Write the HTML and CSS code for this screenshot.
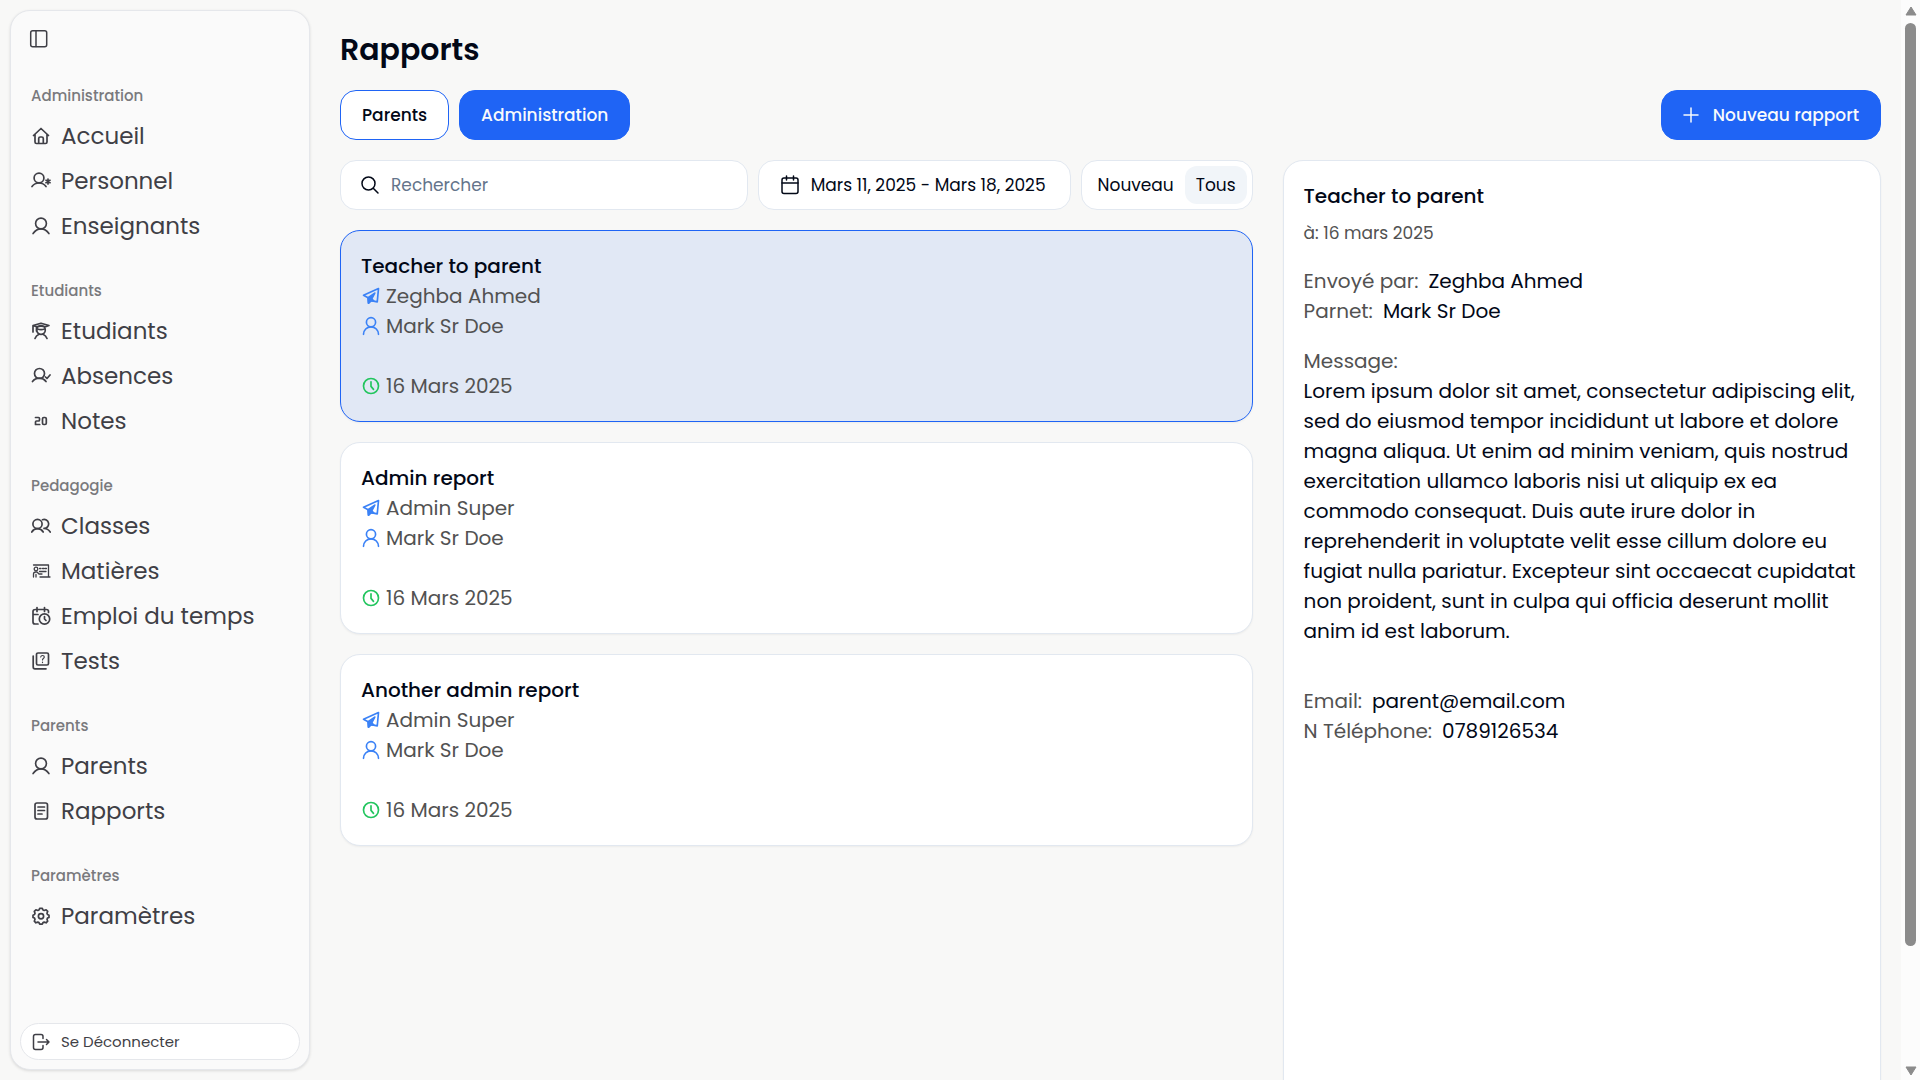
FILE: index.html
```html
<!DOCTYPE html>
<html lang="fr">
<head>
<meta charset="utf-8">
<meta name="viewport" content="width=device-width, initial-scale=1">
<title>Rapports</title>
<link rel="stylesheet" href="styles.css">
</head>
<body>
<svg class="sprite" aria-hidden="true">
  <symbol id="user" viewBox="0 0 24 24"><circle cx="12" cy="9" r="6.500"/><path d="M2.500 21C5 17.500 8 15.500 12 15.500s7 2 9.500 5.500"/></symbol>
  <symbol id="send" viewBox="0 0 24 24"><path d="M21 3 3 11l5.500 3L9 20.500l3-3 7.500 1.500z"/><path class="solid" d="M16.500 8.500 8.500 14 9 20.500l3-3 3.500.700-2.500-3z"/></symbol>
  <symbol id="person" viewBox="0 0 24 24"><circle cx="12" cy="7.500" r="5.500"/><path d="M3 22a9 9 0 0 1 18 0"/></symbol>
  <symbol id="clock" viewBox="0 0 24 24"><circle cx="12" cy="12" r="9"/><path d="M12 7v5.500l3 3.500"/></symbol>
</svg>
<div class="shell">
  <aside class="sidebar">
    <button class="collapse" type="button" aria-label="Réduire le menu">
      <svg class="icon" viewBox="0 0 20 20"><rect x="1.700" y="1.700" width="16" height="16" rx="2"/><path d="M7 2v15.500"/></svg>
    </button>
    <nav class="nav">
      <section class="group">
        <h2 class="group-label">Administration</h2>
        <a class="nav-link" href="#"><svg class="icon" viewBox="0 0 20 20"><path d="m2.500 9.500 7.500-7 7.500 7M4 8.500V16q0 1.500 1.500 1.500h9q1.500 0 1.500-1.500V8.500M7.700 17.500v-5q0-1.500 1.500-1.500h1.600q1.500 0 1.500 1.500v5"/></svg>Accueil</a>
        <a class="nav-link" href="#"><svg class="icon" viewBox="0 0 20 20"><circle cx="8" cy="7" r="4.900"/><path d="M1 15.500q2.500-3.500 7-3.500t7 3.500M17 8v5M15 9.300l4 2.400M19 9.300l-4 2.400"/></svg>Personnel</a>
        <a class="nav-link" href="#"><svg class="icon"><use href="#user"/></svg>Enseignants</a>
      </section>
      <section class="group">
        <h2 class="group-label">Etudiants</h2>
        <a class="nav-link" href="#"><svg class="icon" viewBox="0 0 20 20"><path d="m2 4.500 8-2.300 8 2.300-3.500 1.300q-4.500-1.500-9 0zM2 4.500V11M5.500 6v4"/><circle cx="10" cy="9" r="4.300"/><path d="M6.500 8q3.500 1.200 7 0M4 17.500q1-3 4-4.300M16 17.500q-1-3-4-4.300"/></svg>Etudiants</a>
        <a class="nav-link" href="#"><svg class="icon" viewBox="0 0 20 20"><circle cx="8.500" cy="7.500" r="5"/><path d="M1.500 15.500q2.500-3.300 7-3.300 4 0 6.500 3.300M14.500 11l1.500 1.500 3-3.500"/></svg>Absences</a>
        <a class="nav-link" href="#"><svg class="icon" viewBox="0 0 20 20"><path d="M4.500 6.500h3q1 0 1 1V9q0 1-1 1h-2q-1 0-1 1v2.500h4.200"/><rect x="11.500" y="6.500" width="3.800" height="7" rx="1.300"/></svg>Notes</a>
      </section>
      <section class="group">
        <h2 class="group-label">Pedagogie</h2>
        <a class="nav-link" href="#"><svg class="icon" viewBox="0 0 20 20"><circle cx="6.500" cy="8" r="4.600"/><path d="M.8 16q2-3.300 5.700-3.300t5.700 3.300M11.500 3.700a4.500 4.500 0 1 1 1.500 8.700M13 12.500q4 0 6.200 3.500"/></svg>Classes</a>
        <a class="nav-link" href="#"><svg class="icon thin" viewBox="0 0 20 20"><path d="M2.500 4h15v12M9 16h10M8.500 7.500h1.500M11.500 7.500H13M8.500 10.500H15M14 7.500h1.500M2.500 16v-3q0-2 2.500-2h1l2 2h3M5 16v-2.500"/><circle cx="5" cy="8" r="1.800"/></svg>Matières</a>
        <a class="nav-link" href="#"><svg class="icon" viewBox="0 0 20 20"><path d="M17.500 6.500v-1q0-2-2-2h-11q-2.500 0-2.500 2V16q0 2 2 2h3M6 1.500v4M13.500 1.500v4M2 8.500h5"/><circle cx="13.500" cy="13" r="5.200"/><path d="M13.500 10.500V13l1.500 1.500"/></svg>Emploi du temps</a>
        <a class="nav-link" href="#"><svg class="icon" viewBox="0 0 20 20"><rect x="5.500" y="2" width="12" height="12" rx="1.500"/><path d="M2.200 5v11q0 1.800 1.800 1.800h11"/><path class="fine" d="M9.700 6q.3-1.500 1.800-1.500 1.800 0 1.800 1.500 0 .8-1 1.500-.8.600-.8 1.500M11.500 11v.6"/></svg>Tests</a>
      </section>
      <section class="group">
        <h2 class="group-label">Parents</h2>
        <a class="nav-link" href="#"><svg class="icon"><use href="#user"/></svg>Parents</a>
        <a class="nav-link" href="#"><svg class="icon" viewBox="0 0 20 20"><rect x="4" y="2" width="12.500" height="16" rx="2"/><path d="M7 6h6.500M7 9.500h6.500M7 13h4"/></svg>Rapports</a>
      </section>
      <section class="group">
        <h2 class="group-label">Paramètres</h2>
        <a class="nav-link" href="#"><svg class="icon" viewBox="0 0 20 20"><path d="m8.700 2.300h2.600l.7 1.700 1.200.5 1.900-.7 1.600 1.600-.7 1.900.5 1.200 1.500.7v2.200l-1.500.7-.5 1.200.7 1.900-1.600 1.600-1.900-.7-1.200.5-.7 1.500H8.700L8 16.600l-1.200-.5-1.900.7-1.600-1.600.7-1.900-.5-1.200-1.500-.7V9.200l1.500-.7.5-1.200-.7-1.900 1.600-1.600 1.900.7L8 4z"/><circle cx="10" cy="10.200" r="2.600"/></svg>Paramètres</a>
      </section>
    </nav>
    <button class="logout" type="button"><svg class="icon" viewBox="0 0 20 20"><path d="M12 6.500V4.500q0-2-2-2H4.500q-2 0-2 2v11q0 2 2 2H10q2 0 2-2v-2M7 10h11M15.500 7.500 18 10l-2.500 2.500"/></svg>Se Déconnecter</button>
  </aside>

  <main class="main">
    <h1 class="title">Rapports</h1>
    <div class="actions">
      <button class="btn btn-outline" type="button">Parents</button>
      <button class="btn btn-primary" type="button">Administration</button>
      <button class="btn btn-primary btn-new" type="button"><svg class="icon" viewBox="0 0 20 20"><path d="M8 3v14M1 10h14"/></svg>Nouveau rapport</button>
    </div>
    <div class="columns">
      <div class="list">
        <div class="filters">
          <label class="field search">
            <svg class="icon" viewBox="0 0 20 20"><circle cx="7.500" cy="8.500" r="6.500"/><path d="m12.500 13.500 4.500 4.500"/></svg>
            <input type="search" placeholder="Rechercher" aria-label="Rechercher">
          </label>
          <button class="field date" type="button"><svg class="icon" viewBox="0 0 20 20"><rect x="1" y="3" width="16" height="15.500" rx="2"/><path d="M1 8h16M5.500 1v4M12.500 1v4"/></svg>Mars 11, 2025 - Mars 18, 2025</button>
          <div class="field toggle">
            <button class="option" type="button">Nouveau</button>
            <button class="option option-on" type="button">Tous</button>
          </div>
        </div>
        <article class="card card-active">
          <h3 class="card-title">Teacher to parent</h3>
          <p class="meta"><svg class="icon blue"><use href="#send"/></svg>Zeghba Ahmed</p>
          <p class="meta"><svg class="icon blue"><use href="#person"/></svg>Mark Sr Doe</p>
          <p class="meta when"><svg class="icon green"><use href="#clock"/></svg>16 Mars 2025</p>
        </article>
        <article class="card">
          <h3 class="card-title">Admin report</h3>
          <p class="meta"><svg class="icon blue"><use href="#send"/></svg>Admin Super</p>
          <p class="meta"><svg class="icon blue"><use href="#person"/></svg>Mark Sr Doe</p>
          <p class="meta when"><svg class="icon green"><use href="#clock"/></svg>16 Mars 2025</p>
        </article>
        <article class="card">
          <h3 class="card-title">Another admin report</h3>
          <p class="meta"><svg class="icon blue"><use href="#send"/></svg>Admin Super</p>
          <p class="meta"><svg class="icon blue"><use href="#person"/></svg>Mark Sr Doe</p>
          <p class="meta when"><svg class="icon green"><use href="#clock"/></svg>16 Mars 2025</p>
        </article>
      </div>
      <section class="card detail">
        <h3 class="card-title">Teacher to parent</h3>
        <p class="sent">à: 16 mars 2025</p>
        <p class="row"><span class="key">Envoyé par:</span><span>Zeghba Ahmed</span></p>
        <p class="row"><span class="key">Parnet:</span><span>Mark Sr Doe</span></p>
        <p class="key message-label">Message:</p>
        <p class="message">Lorem ipsum dolor sit amet, consectetur adipiscing elit, sed do eiusmod tempor incididunt ut labore et dolore magna aliqua. Ut enim ad minim veniam, quis nostrud exercitation ullamco laboris nisi ut aliquip ex ea commodo consequat. Duis aute irure dolor in reprehenderit in voluptate velit esse cillum dolore eu fugiat nulla pariatur. Excepteur sint occaecat cupidatat non proident, sunt in culpa qui officia deserunt mollit anim id est laborum.</p>
        <p class="row"><span class="key">Email:</span><span>parent@email.com</span></p>
        <p class="row"><span class="key">N Téléphone:</span><span>0789126534</span></p>
      </section>
    </div>
  </main>

  <div class="scrollbar" aria-hidden="true">
    <svg class="arrow" viewBox="0 0 12 10"><path d="M6 1 11 9H1z"/></svg>
    <div class="track"><div class="thumb"></div></div>
    <svg class="arrow" viewBox="0 0 12 10"><path d="M6 9 11 1H1z"/></svg>
  </div>
</div>
</body>
</html>
```
FILE: styles.css
```css
*, *::before, *::after { box-sizing: border-box; }
html { overflow: hidden; }
body {
  margin: 0;
  background: #f8f8f7;
  color: #020817;
  font-family: Poppins, Inter, "Noto Sans", sans-serif;
  font-size: 20px;
  line-height: 30px;
}
h1, h2, h3, p { margin: 0; font-weight: 400; }
button, input { font: inherit; color: inherit; }
button { cursor: pointer; }
.sprite { display: none; }
.icon {
  width: 20px;
  height: 20px;
  flex: none;
  fill: none;
  stroke: currentColor;
  stroke-width: 1.5;
  stroke-linecap: round;
  stroke-linejoin: round;
}
.icon use { stroke-width: 2; }
.nav-link .icon { stroke-width: 1.7; }
.nav-link .icon.thin { stroke-width: 1.3; }
.fine { stroke-width: 1.2; }
.solid { fill: currentColor; }
.blue, .green { margin-right: 5px; }
.blue { color: #3b82f6; }
.green { color: #22c55e; }

.shell { display: flex; height: 100vh; overflow: hidden; }

.sidebar {
  display: flex;
  flex-direction: column;
  flex: none;
  width: 300px;
  margin: 10px 0 10px 10px;
  padding: 18px 9px 9px;
  background: #fafafa;
  border: 1px solid #e5e7eb;
  border-radius: 20px;
  box-shadow: 0 1px 3px rgb(0 0 0 / 12%);
  color: #3f3f46;
}
.collapse {
  display: flex;
  width: 20px;
  margin-left: 9px;
  padding: 0;
  border: 0;
  background: none;
}
.nav { flex: 1; padding: 29px 10px 0 11px; }
.group { margin-bottom: 25px; }
.group-label {
  font-size: 15px;
  font-weight: 500;
  line-height: 35px;
  color: #79797d;
}
.nav-link {
  display: flex;
  align-items: center;
  gap: 10px;
  height: 45px;
  font-size: 23px;
  color: inherit;
  text-decoration: none;
}
.logout {
  display: flex;
  align-items: center;
  gap: 10px;
  height: 37px;
  padding: 0 10px;
  border: 1px solid #e5e7eb;
  border-radius: 20px;
  background: #fff;
  font-size: 15px;
}

.main { flex: 1; min-width: 0; padding: 30px 20px 0 30px; }
.title { font-size: 30px; font-weight: 600; line-height: 40px; }
.actions { display: flex; gap: 10px; margin: 20px 0; }
.btn {
  display: flex;
  align-items: center;
  gap: 10px;
  height: 50px;
  padding: 0 21px;
  border: 1px solid #1f64f5;
  border-radius: 16px;
  font-size: 17px;
  font-weight: 500;
}
.btn-outline { background: #fff; }
.btn-primary { background: #1f64f5; color: #f8fafc; }
.btn-new { margin-left: auto; }

.columns { display: grid; grid-template-columns: 61fr 40fr; gap: 30px; }
.list { display: flex; flex-direction: column; gap: 20px; }
.filters { display: flex; gap: 10px; }
.field {
  display: flex;
  align-items: center;
  gap: 10px;
  height: 50px;
  padding: 0 20px;
  background: #fff;
  border: 1px solid #e2e8f0;
  border-radius: 16px;
  font-size: 17px;
}
.search { flex: 1; min-width: 0; }
.search input { flex: 1; min-width: 0; padding: 0; border: 0; outline: 0; background: none; }
.search input::placeholder { color: #64748b; opacity: 1; }
.date { padding: 0 24px 0 22px; }
.toggle { gap: 0; padding: 0 5px; }
.option { height: 38px; padding: 0 11px; border: 0; border-radius: 12px; background: none; }
.option-on { background: #f1f5f9; }

.card {
  padding: 20px;
  background: #fff;
  border: 1px solid #e2e8f0;
  border-radius: 20px;
  box-shadow: 0 1px 2px rgb(0 0 0 / 5%);
}
.card-active { background: #e1e8f5; border-color: #1f64f5; }
.card-title { font-size: 20px; font-weight: 500; }
.meta { display: flex; align-items: center; color: #525252; }
.when { margin-top: 30px; }

.detail { min-height: 100vh; }
.sent { margin: 7px 0 18px; font-size: 17px; color: #525252; }
.row { display: flex; gap: 10px; }
.key { color: #525252; }
.message-label { margin-top: 20px; }
.message { margin-bottom: 40px; }

.scrollbar {
  display: flex;
  flex-direction: column;
  align-items: center;
  justify-content: space-between;
  flex: none;
  width: 19px;
  padding: 6px 0 4px;
  background: #fcfcfc;
}
.arrow { width: 12px; height: 10px; fill: #8b8b8b; stroke: #8b8b8b; stroke-linejoin: round; }
.track { flex: 1; width: 11px; padding: 7px 0 6px; }
.thumb { height: 89%; border-radius: 6px; background: #8b8b8b; }
```
